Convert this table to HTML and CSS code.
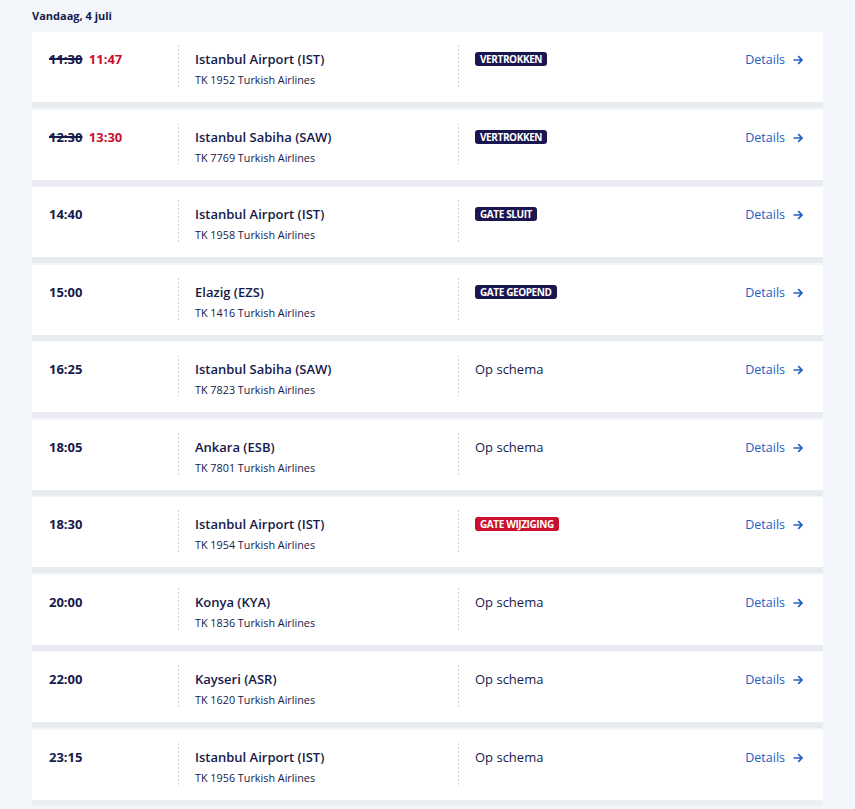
FILE: index.html
```html
<!DOCTYPE html>
<html lang="nl">
<head>
<meta charset="utf-8">
<title>Vertrektijden</title>
<link rel="stylesheet" href="styles.css">
</head>
<body>
<main class="page">
  <h2 class="day">Vandaag, 4 juli</h2>
  <ul class="flights">
    <li class="card">
      <div class="time"><s class="old">11:30</s> <span class="new">11:47</span></div>
      <div class="dest"><div class="city">Istanbul Airport (IST)</div><div class="flight">TK 1952 Turkish Airlines</div></div>
      <div class="status"><span class="badge">VERTROKKEN</span></div>
      <a class="details" href="#">Details <svg class="arrow" viewBox="0 0 12 12"><path d="M1.5 6h8.5M6.2 2.2L10 6l-3.8 3.8"/></svg></a>
    </li>
    <li class="card">
      <div class="time"><s class="old">12:30</s> <span class="new">13:30</span></div>
      <div class="dest"><div class="city">Istanbul Sabiha (SAW)</div><div class="flight">TK 7769 Turkish Airlines</div></div>
      <div class="status"><span class="badge">VERTROKKEN</span></div>
      <a class="details" href="#">Details <svg class="arrow" viewBox="0 0 12 12"><path d="M1.5 6h8.5M6.2 2.2L10 6l-3.8 3.8"/></svg></a>
    </li>
    <li class="card">
      <div class="time">14:40</div>
      <div class="dest"><div class="city">Istanbul Airport (IST)</div><div class="flight">TK 1958 Turkish Airlines</div></div>
      <div class="status"><span class="badge">GATE SLUIT</span></div>
      <a class="details" href="#">Details <svg class="arrow" viewBox="0 0 12 12"><path d="M1.5 6h8.5M6.2 2.2L10 6l-3.8 3.8"/></svg></a>
    </li>
    <li class="card">
      <div class="time">15:00</div>
      <div class="dest"><div class="city">Elazig (EZS)</div><div class="flight">TK 1416 Turkish Airlines</div></div>
      <div class="status"><span class="badge">GATE GEOPEND</span></div>
      <a class="details" href="#">Details <svg class="arrow" viewBox="0 0 12 12"><path d="M1.5 6h8.5M6.2 2.2L10 6l-3.8 3.8"/></svg></a>
    </li>
    <li class="card">
      <div class="time">16:25</div>
      <div class="dest"><div class="city">Istanbul Sabiha (SAW)</div><div class="flight">TK 7823 Turkish Airlines</div></div>
      <div class="status">Op schema</div>
      <a class="details" href="#">Details <svg class="arrow" viewBox="0 0 12 12"><path d="M1.5 6h8.5M6.2 2.2L10 6l-3.8 3.8"/></svg></a>
    </li>
    <li class="card">
      <div class="time">18:05</div>
      <div class="dest"><div class="city">Ankara (ESB)</div><div class="flight">TK 7801 Turkish Airlines</div></div>
      <div class="status">Op schema</div>
      <a class="details" href="#">Details <svg class="arrow" viewBox="0 0 12 12"><path d="M1.5 6h8.5M6.2 2.2L10 6l-3.8 3.8"/></svg></a>
    </li>
    <li class="card">
      <div class="time">18:30</div>
      <div class="dest"><div class="city">Istanbul Airport (IST)</div><div class="flight">TK 1954 Turkish Airlines</div></div>
      <div class="status"><span class="badge badge-red">GATE WIJZIGING</span></div>
      <a class="details" href="#">Details <svg class="arrow" viewBox="0 0 12 12"><path d="M1.5 6h8.5M6.2 2.2L10 6l-3.8 3.8"/></svg></a>
    </li>
    <li class="card">
      <div class="time">20:00</div>
      <div class="dest"><div class="city">Konya (KYA)</div><div class="flight">TK 1836 Turkish Airlines</div></div>
      <div class="status">Op schema</div>
      <a class="details" href="#">Details <svg class="arrow" viewBox="0 0 12 12"><path d="M1.5 6h8.5M6.2 2.2L10 6l-3.8 3.8"/></svg></a>
    </li>
    <li class="card">
      <div class="time">22:00</div>
      <div class="dest"><div class="city">Kayseri (ASR)</div><div class="flight">TK 1620 Turkish Airlines</div></div>
      <div class="status">Op schema</div>
      <a class="details" href="#">Details <svg class="arrow" viewBox="0 0 12 12"><path d="M1.5 6h8.5M6.2 2.2L10 6l-3.8 3.8"/></svg></a>
    </li>
    <li class="card card-last">
      <div class="time">23:15</div>
      <div class="dest"><div class="city">Istanbul Airport (IST)</div><div class="flight">TK 1956 Turkish Airlines</div></div>
      <div class="status">Op schema</div>
      <a class="details" href="#">Details <svg class="arrow" viewBox="0 0 12 12"><path d="M1.5 6h8.5M6.2 2.2L10 6l-3.8 3.8"/></svg></a>
    </li>
  </ul>
</main>
</body>
</html>
```

FILE: styles.css
```css
* { box-sizing: border-box; }
html, body { margin: 0; padding: 0; }
body {
  background: #f3f6fb;
  font-family: "Open Sans", "Noto Sans", sans-serif;
  color: #161a4a;
}
.page {
  padding: 8px 32px 0 32px;
  width: 855px;
}
.day {
  margin: 0;
  font-size: 11px;
  line-height: 16px;
  font-weight: 700;
  color: #161a4a;
  height: 24px;
}
.flights {
  list-style: none;
  margin: 0;
  padding: 0;
  width: 791px;
}
.card {
  display: grid;
  grid-template-columns: 146px 280px 1fr auto;
  background: #fff;
  padding: 13px 19px 13px 0;
  height: 76px;
  border-bottom: 6px solid #e8ebf0;
  margin-bottom: 1.5px;
}
.card-last { border-bottom-color: #eceff4; }
.time {
  padding: 5px 0 0 17px;
  font-size: 13px;
  line-height: 18px;
  font-weight: 700;
}
.old { text-decoration: line-through; text-decoration-thickness: 1.5px; }
.new { color: #c8102e; margin-left: 3px; }
.dest, .status {
  background-image: repeating-linear-gradient(to bottom, #d2d5dc 0 2px, transparent 2px 4px);
  background-size: 1px 100%;
  background-repeat: no-repeat;
  padding-left: 17px;
  padding-top: 5px;
}
.city {
  font-size: 13px;
  line-height: 18px;
  font-weight: 600;
}
.flight {
  margin-top: 4px;
  font-size: 10.8px;
  line-height: 16px;
}
.status {
  font-size: 13px;
  line-height: 18px;
}
.badge {
  display: inline-block;
  vertical-align: top;
  margin-top: 2px;
  background: #1a1650;
  color: #fff;
  font-size: 10px;
  font-weight: 700;
  line-height: 14px;
  padding: 0 5px;
  border-radius: 3px;
  letter-spacing: -0.4px;
}
.badge-red { background: #c8102e; }
.details {
  display: flex;
  align-items: flex-start;
  gap: 7px;
  padding-top: 6px;
  font-size: 12.5px;
  line-height: 18px;
  color: #2460c2;
  text-decoration: none;
}
.arrow {
  width: 12px;
  height: 12px;
  margin-top: 3px;
  fill: none;
  stroke: #2460c2;
  stroke-width: 1.7;
}
```
